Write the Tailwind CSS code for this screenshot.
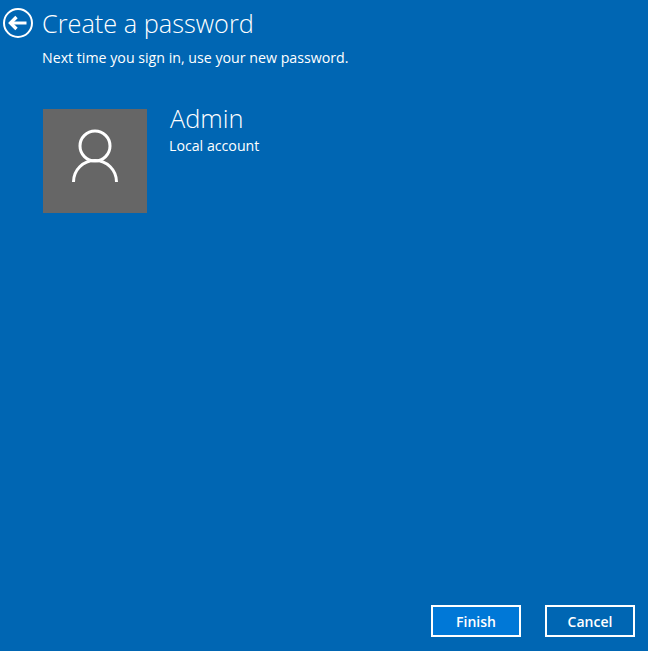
<!DOCTYPE html>
<html lang="en">
  <head>
    <meta charset="UTF-8" />
    <title>Create a password</title>
    <script src="https://cdn.jsdelivr.net/npm/@tailwindcss/browser@4"></script>
  </head>
  <body class="bg-[#0066b3] text-white font-['Open_Sans',sans-serif] overflow-hidden">
    <div class="h-[651px] flex flex-col">
      <!-- Header -->
      <div class="flex items-center h-[48px] pl-[3px]">
        <svg width="30" height="30" viewBox="0 0 30 30" fill="none" stroke="white" class="shrink-0 -mt-[3px]">
          <circle cx="15" cy="15" r="14" stroke-width="2" />
          <path d="M7.5 15 H23.5" stroke-width="3" />
          <path d="M13.5 9 L7.5 15 L13.5 21" stroke-width="3.4" />
        </svg>
        <h1 class="ml-[9px] -mt-[3px] text-[25.3px] leading-[30px] font-light">Create a password</h1>
      </div>
      <p class="ml-[42px] text-[14.2px] leading-[20px]">Next time you sign in, use your new password.</p>

      <!-- Account -->
      <div class="flex ml-[43px] mt-[41px]">
        <div class="w-[104px] h-[104px] bg-[#666666] flex items-center justify-center">
          <svg width="104" height="104" viewBox="0 0 104 104" fill="none" stroke="white" stroke-width="3">
            <circle cx="52" cy="37" r="15" />
            <path d="M30.5 73 C30.5 61 40 51.5 52 51.5 C64 51.5 73.5 61 73.5 73" />
          </svg>
        </div>
        <div class="ml-[22px]">
          <div class="ml-[1px] text-[25.4px] leading-[30px] font-light -mt-[6px]">Admin</div>
          <div class="text-[14.2px] leading-[20px] mt-[3px]">Local account</div>
        </div>
      </div>

      <!-- Buttons -->
      <div class="mt-auto mb-[14px] mr-[13px] flex justify-end gap-[24px]">
        <button class="w-[90px] h-[32px] border-2 border-white bg-[#0078d7] text-[14px] font-semibold">Finish</button>
        <button class="w-[90px] h-[32px] border-2 border-white text-[14px] font-semibold">Cancel</button>
      </div>
    </div>
  </body>
</html>
